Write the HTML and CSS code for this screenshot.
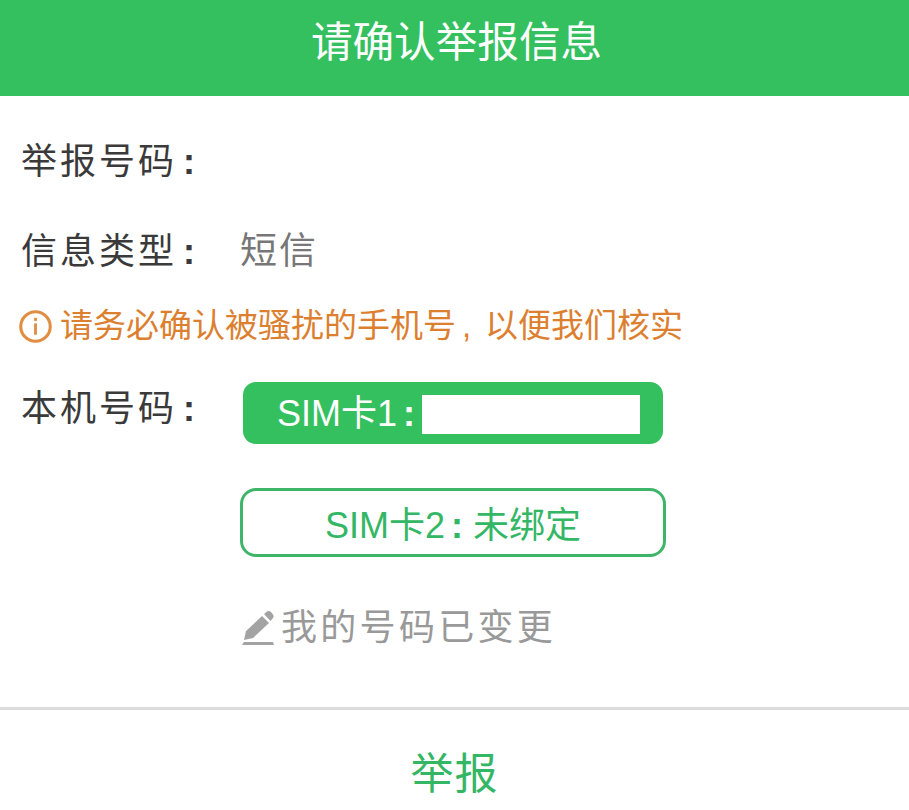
FILE: index.html
```html
<!DOCTYPE html>
<html lang="zh-CN">
<head>
  <meta charset="UTF-8" />
  <title>请确认举报信息</title>
  <link rel="stylesheet" href="styles.css">
</head>
<body>
  <header class="titlebar">请确认举报信息</header>

  <section class="form">
    <div class="row row-number">
      <span class="label">举报号码<b class="colon">:</b></span>
    </div>
    <div class="row row-type">
      <span class="label">信息类型<b class="colon">:</b></span>
      <span class="value">短信</span>
    </div>
    <div class="notice">
      <svg class="notice-icon" viewBox="0 0 32 32" width="32" height="32">
        <circle cx="16" cy="16" r="14.3" fill="none" stroke="#e08f42" stroke-width="3"/>
        <rect x="14.6" y="13" width="2.8" height="11" fill="#e08f42"/>
        <rect x="14.6" y="7.6" width="2.8" height="3" fill="#e08f42"/>
      </svg>
      <span>请务必确认被骚扰的手机号<b class="comma">,</b>以便我们核实</span>
    </div>
    <div class="row row-sim">
      <span class="label label-sim">本机号码<b class="colon">:</b></span>
      <div class="sim-list">
        <button class="sim sim-active"><span class="sim-text">SIM卡1<b class="colon-sim">:</b></span><span class="mask"></span></button>
        <button class="sim sim-empty"><span class="sim-text-2">SIM卡2<b class="colon-sim">:</b>未绑定</span></button>
        <div class="change">
          <svg class="change-icon" viewBox="0 0 34 36" width="34" height="36">
            <path d="M5 21 L21 6 L28 13 L12 28 L3 30 Z" fill="#a3a3a3"/>
            <path d="M23 4 L26 1.5 Q28 0.5 30 2 L32 4.5 Q33.5 6.5 32 8 L29.5 11 Z" fill="#a3a3a3"/>
            <path d="M3 32 H32 L33 35 H1 Z" fill="#a3a3a3"/>
          </svg>
          <span>我的号码已变更</span>
        </div>
      </div>
    </div>
  </section>

  <footer class="actions">
    <button class="report">举报</button>
  </footer>
</body>
</html>
```

FILE: styles.css
```css
*{box-sizing:border-box;margin:0;padding:0;}
body{background:#fff;color:#333;font-family:"Liberation Sans","Noto Sans CJK SC",sans-serif;height:810px;overflow:hidden;}
button{font-family:inherit;cursor:pointer;}

.titlebar{height:96px;background:#34c05f;color:#fff;font-size:41.6px;line-height:86px;padding-left:4px;text-align:center;}

.form{padding:0 0 0 21px;height:611px;}
.row{display:flex;font-size:36px;line-height:50px;}
.label{width:219px;flex:none;letter-spacing:3px;color:#3a3a3a;}
.colon{margin-left:6px;}
.row-number{padding-top:41px;}
.row-type{padding-top:40px;}
.value{color:#777;font-size:37px;letter-spacing:2px;}

.notice{display:flex;align-items:center;gap:8px;margin:26px 0 0 -2px;font-size:33px;line-height:46px;color:#dc8030;white-space:nowrap;}
.notice-icon{flex:none;width:33px;height:33px;}
.comma{display:inline-block;width:29px;padding-left:6px;font-weight:normal;}

.row-sim{margin-top:33px;}
.label-sim{padding-top:2px;}
.sim-list{display:flex;flex-direction:column;align-items:flex-start;}
.sim{display:flex;align-items:center;justify-content:center;font-size:36px;}
.sim-text{padding-bottom:6px;}
.sim-text-2{padding-bottom:2px;}
.colon-sim{margin:0 10px 0 6px;}
.sim-active{width:420px;height:62px;margin-left:3px;padding-left:34px;justify-content:flex-start;background:#34c05f;color:#fff;border:none;border-radius:13px;}
.sim-active .colon-sim{margin-right:0;}
.mask{width:218px;height:39px;margin-left:7px;margin-top:3px;background:#fff;}
.sim-empty{width:426px;height:69px;margin-top:44px;background:#fff;color:#34b765;border:3px solid #3fb56a;border-radius:16px;}
.change{display:flex;align-items:center;gap:6px;margin-top:46px;margin-left:1px;font-size:36px;line-height:50px;letter-spacing:3.3px;color:#999;}
.change-icon{flex:none;}

.actions{border-top:3px solid #dcdcdc;height:103px;display:flex;justify-content:center;}
.report{border:none;background:none;color:#34b765;font-size:43px;height:120px;letter-spacing:1px;}
```
